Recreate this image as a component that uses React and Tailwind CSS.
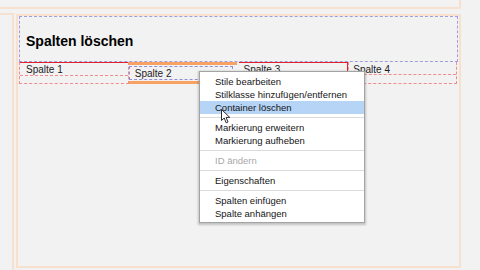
export default function App() {
  const items = [
    { t: "Stile bearbeiten" },
    { t: "Stilklasse hinzufügen/entfernen" },
    { t: "Container löschen", active: true },
    { sep: true },
    { t: "Markierung erweitern" },
    { t: "Markierung aufheben" },
    { sep: true },
    { t: "ID ändern", disabled: true },
    { sep: true },
    { t: "Eigenschaften" },
    { sep: true },
    { t: "Spalten einfügen" },
    { t: "Spalte anhängen" },
  ];

  return (
    <div className="relative w-[480px] h-[270px] overflow-hidden bg-[#f2f2f2] font-['Liberation_Sans',Arial,sans-serif] text-[#1b1b1b]">
      {/* top frame */}
      <div className="h-[9px] w-[461px] border-b-2 border-r-2 border-[#f7e0ce]" />

      <div className="flex mt-[4px]">
        {/* left frame */}
        <div className="w-[14px] h-[257px] shrink-0 border-t-2 border-r-2 border-[#f7e0ce]" />

        {/* page body */}
        <div className="ml-[2px] mt-[1px] w-[445px] h-[254px] border-2 border-[#f7e0ce]">
          <div className="mx-[1px] h-[46px] border border-dashed border-[#9d9ee0] pl-[6px] pt-[14px]">
            <h1 className="text-[14px] leading-[20px] font-bold text-black">Spalten löschen</h1>
          </div>

          <div className="mx-[1px] grid grid-cols-4 text-[10px] leading-[13px]">
            {/* Spalte 1 */}
            <div className="flex flex-col h-[22px] border-x border-b border-dashed border-[#f28a8e]">
              <div className="h-px bg-[#e2212c]" />
              <div className="h-[13px] border-b border-dashed border-[#f28a8e] pl-[6px]">Spalte 1</div>
            </div>

            {/* Spalte 2 (selected) */}
            <div className="flex flex-col h-[22px]">
              <div className="h-[3px] mr-[2px] bg-[#f7a263]" />
              <div className="h-[14px] mt-px mr-[6px] border border-dashed border-[#8f8fd8] pl-[5px]">Spalte 2</div>
              <div className="h-[3px] mt-px mr-[2px] bg-[#f7a263]" />
            </div>

            {/* Spalte 3 */}
            <div className="flex flex-col h-[22px] border-r border-[#e2212c]">
              <div className="h-px bg-[#e2212c]" />
              <div className="h-[13px] border-b border-dashed border-[#f28a8e] pl-[5px]">Spalte 3</div>
            </div>

            {/* Spalte 4 */}
            <div className="flex flex-col h-[22px] mr-px border-x border-b border-dashed border-[#f28a8e]">
              <div className="h-px" />
              <div className="h-[12px] border-b border-dashed border-[#f28a8e] pl-[4px] leading-[13px]">Spalte 4</div>
            </div>
          </div>
        </div>
      </div>

      {/* context menu */}
      <div className="absolute left-[199px] top-[71px] w-[166px] bg-white border border-[#a3a3a3] pt-[3px] pb-[2px] shadow-[0_1px_2px_1px_rgba(0,0,0,0.2)] text-[9.5px] leading-[13px]">
        {items.map((it, i) =>
          it.sep ? (
            <div key={i} className="h-[7px] flex items-center">
              <div className="h-px w-full bg-[#dadada]" />
            </div>
          ) : (
            <div
              key={i}
              className={
                "h-[13px] pl-[15px] whitespace-nowrap " +
                (it.active ? "bg-[#b5d4f6] " : "") +
                (it.disabled ? "text-[#a8a8a8]" : "text-[#151515]")
              }
            >
              {it.t}
            </div>
          )
        )}
      </div>

      {/* mouse pointer */}
      <svg className="absolute left-[221px] top-[109px]" width="11" height="15" viewBox="0 0 11 15">
        <path d="M0.5 0.5 L0.5 11.5 L3.2 9 L5.2 13.8 L7 13 L5.1 8.4 L8.8 8.4 Z" fill="#fff" stroke="#2a2a2a" strokeWidth="1" strokeLinejoin="round" />
      </svg>
    </div>
  );
}
